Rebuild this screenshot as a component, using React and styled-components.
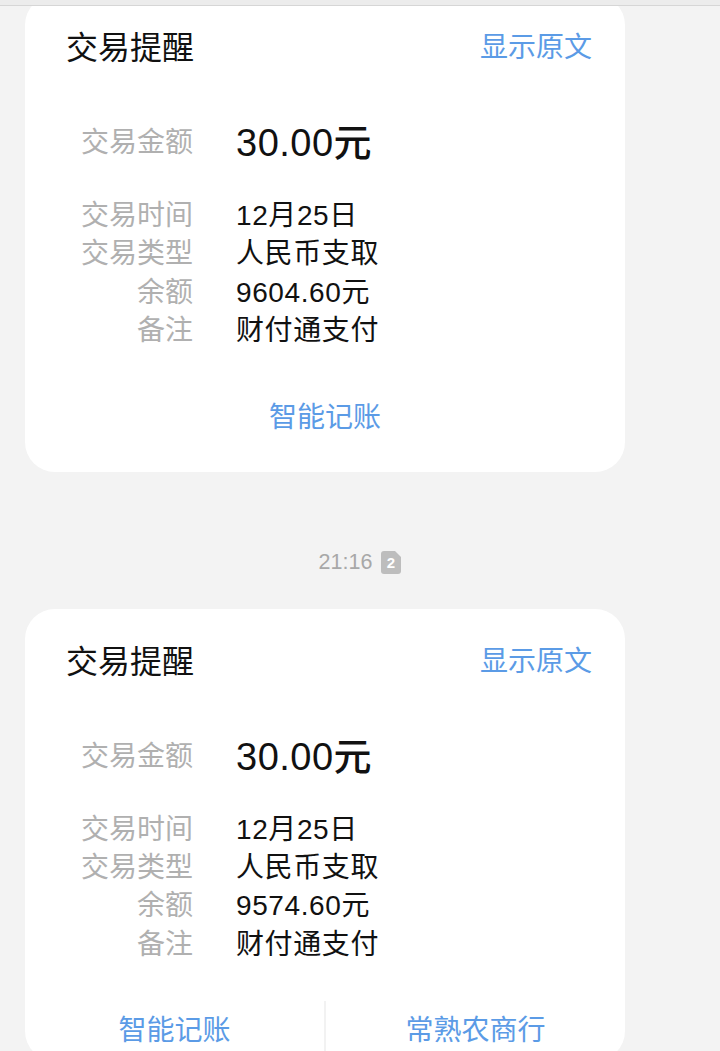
import styled, { createGlobalStyle } from "styled-components";

const GlobalStyle = createGlobalStyle`
  html, body {
    margin: 0;
    padding: 0;
    background: #f3f3f3;
  }
  body {
    font-family: "Liberation Sans", "Noto Sans CJK SC", sans-serif;
    overflow: hidden;
  }
`;

const Page = styled.div`
  width: 720px;
  min-height: 1051px;
  background: #f3f3f3;
`;

// the header of the chat sits over the scrolled list
const TopBar = styled.div`
  position: fixed;
  top: 0;
  left: 0;
  right: 0;
  height: 5px;
  background: #ececec;
  border-bottom: 1px solid #d6d6d6;
  z-index: 2;
`;

const List = styled.div`
  display: flex;
  flex-direction: column;
  margin-top: -5px;
  padding-left: 25px;
`;

const Card = styled.div`
  width: 600px;
  background: #fff;
  border-radius: 30px;
  padding-top: 30px;
  padding-bottom: ${(p) => (p.$split ? "0" : "24px")};
  box-sizing: border-box;
  overflow: hidden;
`;

const Header = styled.div`
  display: flex;
  justify-content: space-between;
  align-items: center;
  height: 40px;
  padding: 0 33px 0 41px;
`;

const Title = styled.div`
  font-size: 32px;
  color: #111;
`;

const LinkText = styled.div`
  font-size: 28px;
  color: #5b9be6;
`;

const Details = styled.div`
  display: grid;
  grid-template-columns: 112px 1fr;
  column-gap: 43px;
  padding-left: 56px;
  margin-top: 54px;
`;

const Label = styled.div`
  text-align: right;
  font-size: 28px;
  line-height: ${(p) => (p.$big ? "48px" : "38.4px")};
  color: #b0b0b0;
  white-space: nowrap;
  margin-bottom: ${(p) => (p.$big ? "30px" : "0")};
`;

const Value = styled.div`
  font-size: ${(p) => (p.$big ? "38px" : "28px")};
  font-weight: ${(p) => (p.$big ? 500 : 400)};
  letter-spacing: ${(p) => (p.$big ? "0.5px" : "0.6px")};
  line-height: ${(p) => (p.$big ? "48px" : "38.4px")};
  color: #111;
  white-space: nowrap;
  margin-bottom: ${(p) => (p.$big ? "30px" : "0")};
`;

const Footer = styled.div`
  display: flex;
  margin-top: 37px;
  height: 60px;
`;

const FooterButton = styled.div`
  flex: 1;
  display: flex;
  justify-content: center;
  padding-top: 10px;
  font-size: 28px;
  line-height: 40px;
  color: #5b9be6;
  border-left: ${(p) => (p.$divider ? "2px solid #f2f2f2" : "none")};
`;

const TimeRow = styled.div`
  display: flex;
  justify-content: center;
  align-items: center;
  gap: 9px;
  width: 670px;
  margin: 71px 0 26px;
  height: 40px;
`;

const Time = styled.span`
  font-size: 21.5px;
  color: #a8a8a8;
`;

function SimBadge({ n }) {
  return (
    <svg width="20" height="23" viewBox="0 0 20 23">
      <path d="M3 0 H14 L20 6 V20 Q20 23 17 23 H3 Q0 23 0 20 V3 Q0 0 3 0 Z" fill="#bdbdbd" />
      <text x="10" y="17" textAnchor="middle" fontSize="15" fontWeight="bold" fill="#fff" fontFamily="Liberation Sans, sans-serif">{n}</text>
    </svg>
  );
}

function TradeCard({ balance, buttons }) {
  const rows = [
    ["交易时间", "12月25日"],
    ["交易类型", "人民币支取"],
    ["余额", balance],
    ["备注", "财付通支付"],
  ];
  return (
    <Card $split={buttons.length > 1}>
      <Header>
        <Title>交易提醒</Title>
        <LinkText>显示原文</LinkText>
      </Header>
      <Details>
        <Label $big>交易金额</Label>
        <Value $big>30.00元</Value>
        {rows.map(([k, v]) => (
          <>
            <Label key={k + "l"}>{k}</Label>
            <Value key={k + "v"}>{v}</Value>
          </>
        ))}
      </Details>
      <Footer>
        {buttons.map((b, i) => (
          <FooterButton key={b} $divider={i > 0}>{b}</FooterButton>
        ))}
      </Footer>
    </Card>
  );
}

export default function App() {
  return (
    <Page>
      <GlobalStyle />
      <TopBar />
      <List>
        <TradeCard balance="9604.60元" buttons={["智能记账"]} />
        <TimeRow>
          <Time>21:16</Time>
          <SimBadge n="2" />
        </TimeRow>
        <TradeCard balance="9574.60元" buttons={["智能记账", "常熟农商行"]} />
      </List>
    </Page>
  );
}
